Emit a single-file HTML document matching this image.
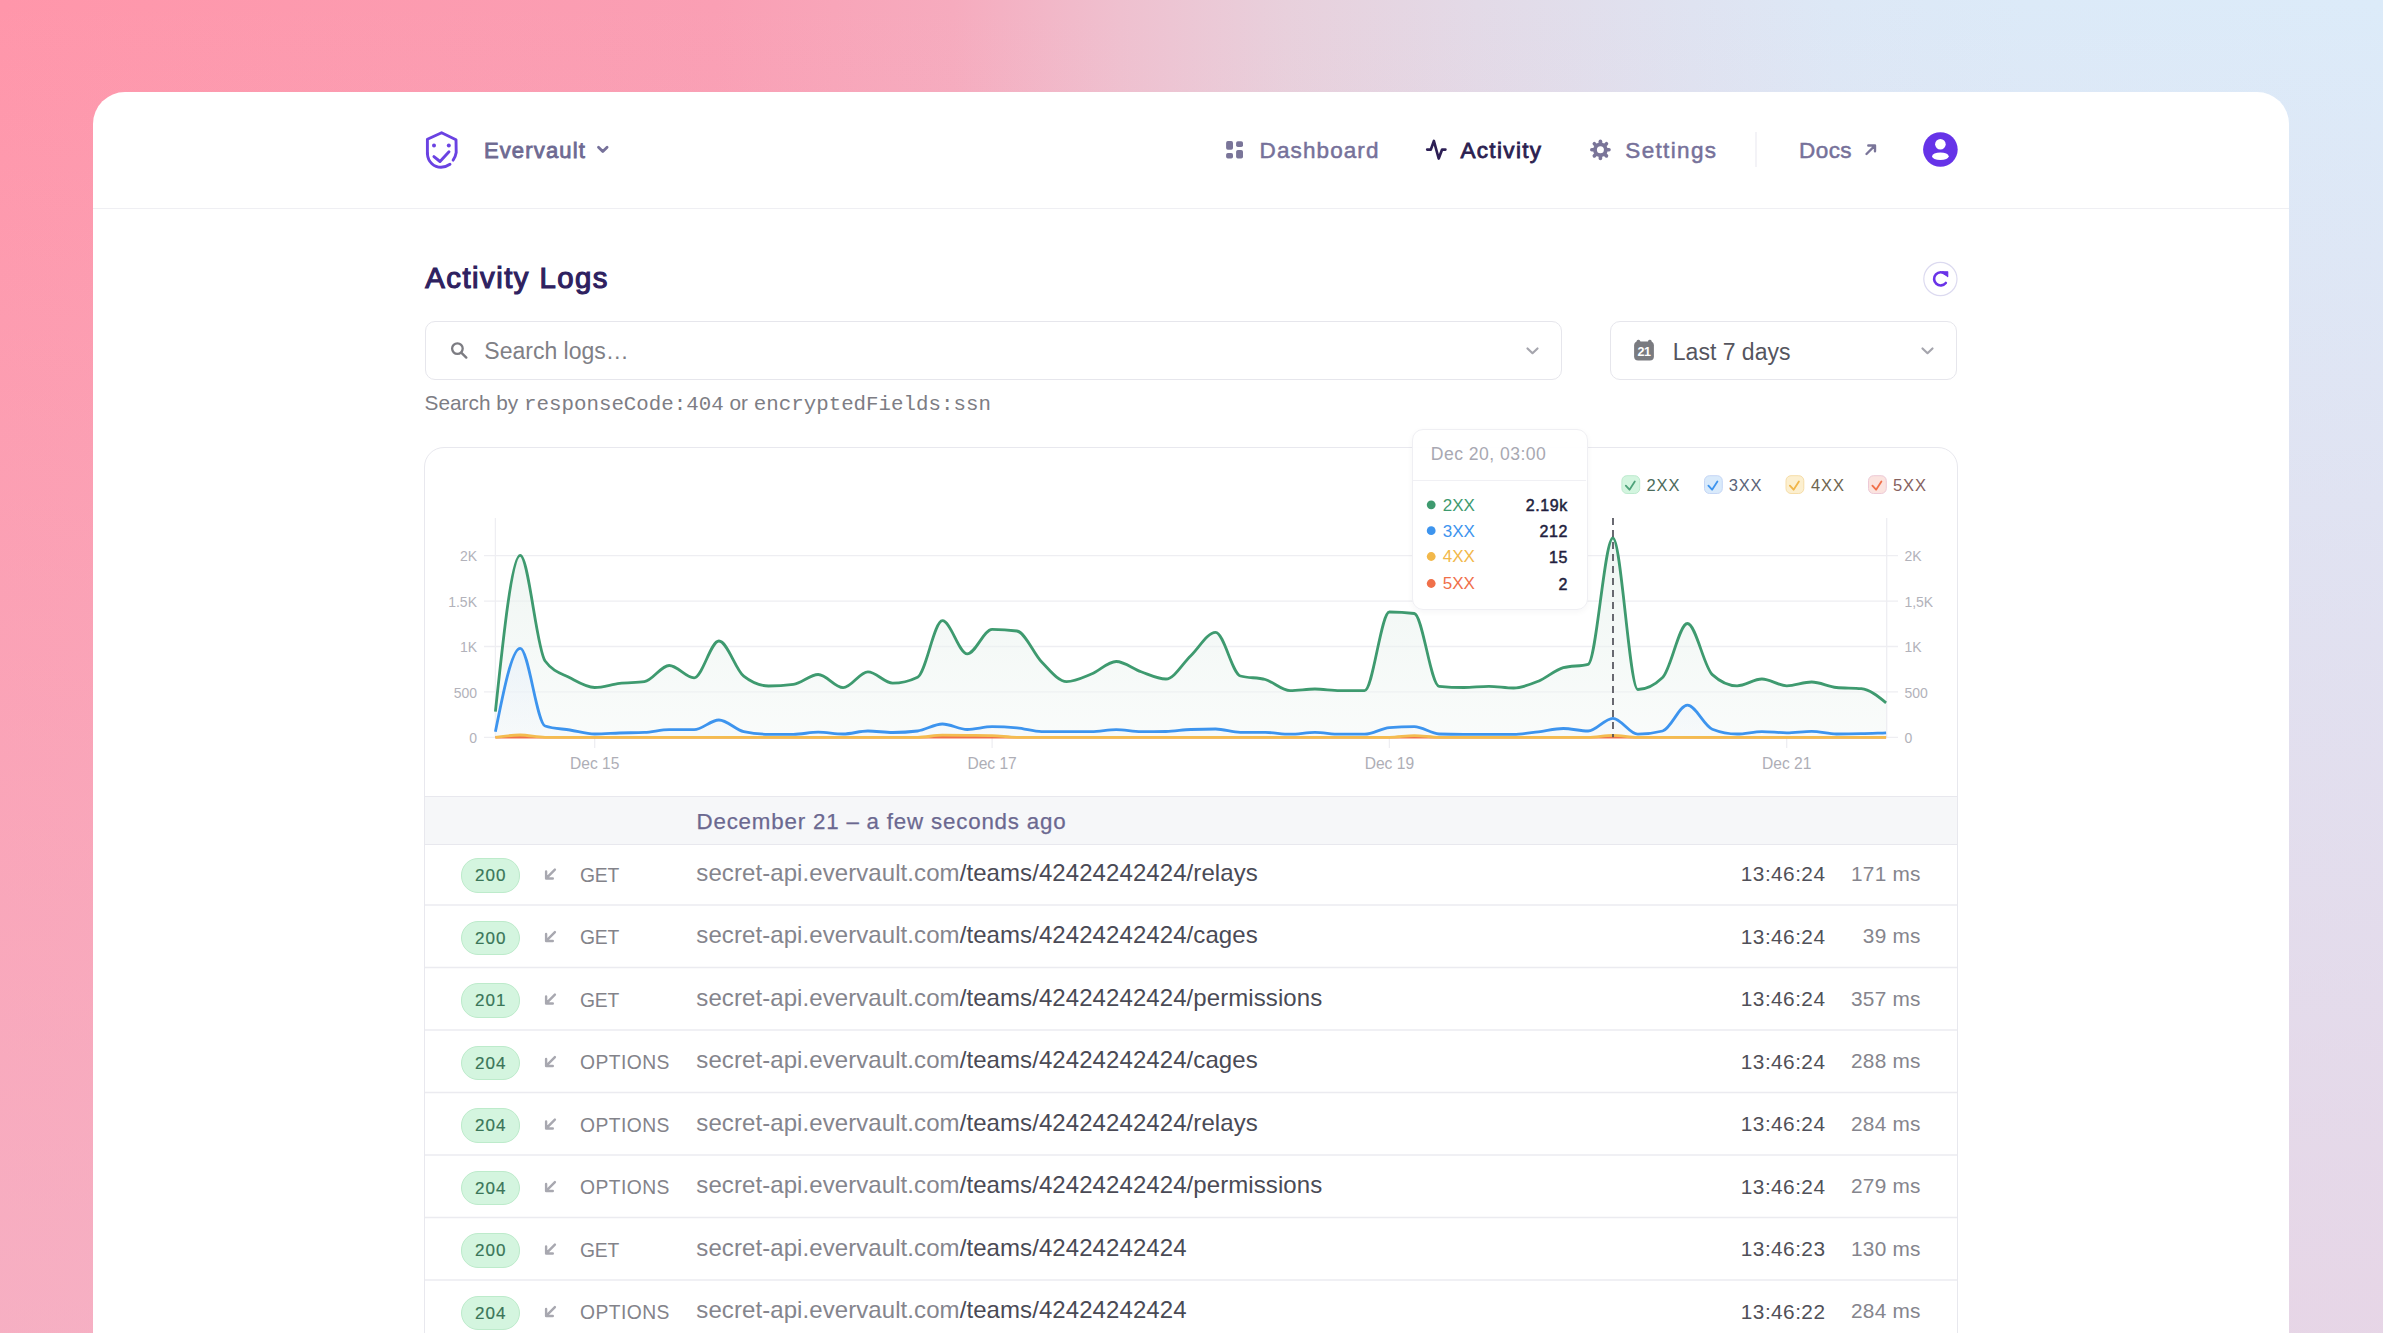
<!DOCTYPE html>
<html><head><meta charset='utf-8'>
<style>
html,body{margin:0;padding:0;}
body{width:2383px;height:1333px;overflow:hidden;position:relative;font-family:'Liberation Sans',sans-serif;
background:linear-gradient(180deg, rgba(239,196,215,0) 0%, rgba(239,196,215,0.55) 100%), linear-gradient(90deg,#FF96AA 0%,#FA9FB4 30%,#F6ABBE 40%,#EFC0CF 47%,#E8D0DC 54%,#E3DAE7 62%,#DFE3F1 71%,#DDE8F6 77%,#DCEAF8 85%,#DCEBF9 100%);}
.abs{position:absolute;}
.t{position:absolute;white-space:pre;line-height:1;}
#card{position:absolute;left:93px;top:92px;width:2196px;height:1300px;background:#fff;border-radius:32px;}
</style></head><body>
<div id='card'></div>
<div class='abs' style='left:93px;top:208px;width:2196px;height:1.3px;background:#EFEFF3'></div>
<div class='abs' style='left:424.6px;top:320.6px;width:1137.4px;height:59.9px;box-sizing:border-box;border:1.5px solid #E6E6EC;border-radius:10px;background:#fff'></div>
<div class='abs' style='left:1609.8px;top:320.6px;width:347.4px;height:59.9px;box-sizing:border-box;border:1.5px solid #E6E6EC;border-radius:10px;background:#fff'></div>
<div class='abs' style='left:424.2px;top:446.6px;width:1534px;height:950px;box-sizing:border-box;border:1.6px solid #E8E8EE;border-radius:20px;background:#fff'></div>
<svg class='abs' style='left:0;top:0' width='2383' height='1333' viewBox='0 0 2383 1333'>
<g fill='none' stroke='#6A42E2' stroke-width='2.9' stroke-linecap='round' stroke-linejoin='round'>
<path d='M427.4,154 L427.4,139.3 L441.6,132.7 L456,139.7 L456.2,152.6 Q455.5,157 453.1,160.2'/>
<path d='M427.4,153.5 C427.8,162.5 434.5,167.3 441,167.3 C444.5,167.3 447.5,166 450,164.3'/>
<path d='M433.9,156.6 L440,161.5 L449,151.7'/>
</g>
<circle cx='434' cy='145.4' r='2' fill='#6A42E2'/><circle cx='448.8' cy='145.4' r='2' fill='#6A42E2'/>
<path d='M598.5,147.3 L602.8,151.6 L607.1,147.3' fill='none' stroke='#76719A' stroke-width='2.8' stroke-linecap='round' stroke-linejoin='round'/>
<!-- dashboard icon -->
<g fill='#7A7599'>
<rect x='1226.1' y='141.1' width='6.9' height='8.7' rx='1.8'/>
<rect x='1236.1' y='141.2' width='6.9' height='5.8' rx='1.8'/>
<rect x='1226.1' y='153' width='6.9' height='5.5' rx='1.8'/>
<rect x='1236.1' y='150' width='6.9' height='8.5' rx='1.8'/>
</g>
<path d='M1427.2,149.6 L1430.8,149.6 L1433.9,141 L1438.7,158.5 L1442.1,149.6 L1445.4,149.6' fill='none' stroke='#2D1F55' stroke-width='2.7' stroke-linecap='round' stroke-linejoin='round'/>
<circle cx='1600.4' cy='149.8' r='7.3' fill='#7A7599'/><line x1='1605.90' y1='149.80' x2='1609.00' y2='149.80' stroke='#7A7599' stroke-width='3.6' stroke-linecap='round'/><line x1='1604.29' y1='153.69' x2='1606.48' y2='155.88' stroke='#7A7599' stroke-width='3.6' stroke-linecap='round'/><line x1='1600.40' y1='155.30' x2='1600.40' y2='158.40' stroke='#7A7599' stroke-width='3.6' stroke-linecap='round'/><line x1='1596.51' y1='153.69' x2='1594.32' y2='155.88' stroke='#7A7599' stroke-width='3.6' stroke-linecap='round'/><line x1='1594.90' y1='149.80' x2='1591.80' y2='149.80' stroke='#7A7599' stroke-width='3.6' stroke-linecap='round'/><line x1='1596.51' y1='145.91' x2='1594.32' y2='143.72' stroke='#7A7599' stroke-width='3.6' stroke-linecap='round'/><line x1='1600.40' y1='144.30' x2='1600.40' y2='141.20' stroke='#7A7599' stroke-width='3.6' stroke-linecap='round'/><line x1='1604.29' y1='145.91' x2='1606.48' y2='143.72' stroke='#7A7599' stroke-width='3.6' stroke-linecap='round'/><circle cx='1600.4' cy='149.8' r='3.5' fill='#fff'/>
<line x1='1756' y1='132' x2='1756' y2='167' stroke='#ECEBF2' stroke-width='1.2'/>
<path d='M1866.5,154 L1875,145.5 M1868.3,145.5 L1875,145.5 L1875,151.3' fill='none' stroke='#7A7599' stroke-width='2.4' stroke-linecap='round' stroke-linejoin='round'/>
<circle cx='1940.4' cy='149.5' r='17.3' fill='#6633E8'/>
<circle cx='1940.4' cy='144.3' r='5.3' fill='#fff'/>
<ellipse cx='1940.4' cy='156.2' rx='8.3' ry='3.8' fill='#fff'/>
<!-- refresh -->
<circle cx='1940.4' cy='279' r='16.6' fill='#fff' stroke='#DCDAF0' stroke-width='1.2'/>
<path d='M1945.4,274.2 A6.6,6.6 0 1,0 1945.8,283' fill='none' stroke='#6A33E8' stroke-width='2.6' stroke-linecap='round'/>
<path d='M1942.3,271.8 L1947.7,271.8 L1947.7,276.6 Z' fill='#6A33E8' stroke='#6A33E8' stroke-width='1.2' stroke-linejoin='round'/>
<!-- search icon -->
<circle cx='457.4' cy='348.6' r='5.3' fill='none' stroke='#7C7C82' stroke-width='2.3'/>
<path d='M461.5,352.8 L466.3,357.6' stroke='#7C7C82' stroke-width='2.4' stroke-linecap='round'/>
<path d='M1527.5,348.5 L1532.5,353.2 L1537.5,348.5' fill='none' stroke='#A5A5AD' stroke-width='2.2' stroke-linecap='round' stroke-linejoin='round'/>
<path d='M1922.5,348.5 L1927.5,353.2 L1932.5,348.5' fill='none' stroke='#A5A5AD' stroke-width='2.2' stroke-linecap='round' stroke-linejoin='round'/>
<!-- calendar -->
<rect x='1634.1' y='341.5' width='19.8' height='19' rx='4' fill='#7A7B80'/>
<rect x='1636.6' y='339.8' width='3.6' height='4' rx='1.5' fill='#7A7B80'/>
<rect x='1648' y='339.8' width='3.6' height='4' rx='1.5' fill='#7A7B80'/>
<text x='1644' y='356' font-family='Liberation Sans' font-weight='700' font-size='12.5' fill='#fff' text-anchor='middle' letter-spacing='-0.5'>21</text>
</svg>
<div class='t' style='left:483.9px;top:140.1px;font-size:22px;color:#6E6A92;font-weight:400;font-family:"Liberation Sans",sans-serif;letter-spacing:1.15px;-webkit-text-stroke:0.85px #6E6A92;'>Evervault</div>
<div class='t' style='left:1259.6px;top:139.7px;font-size:22.5px;color:#76719A;font-weight:400;font-family:"Liberation Sans",sans-serif;letter-spacing:1.1px;-webkit-text-stroke:0.5px #76719A;'>Dashboard</div>
<div class='t' style='left:1460.4px;top:139.9px;font-size:22.5px;color:#2B2150;font-weight:400;font-family:"Liberation Sans",sans-serif;letter-spacing:1.35px;-webkit-text-stroke:0.8px #2B2150;'>Activity</div>
<div class='t' style='left:1625.3px;top:139.7px;font-size:22.5px;color:#76719A;font-weight:400;font-family:"Liberation Sans",sans-serif;letter-spacing:1.35px;-webkit-text-stroke:0.5px #76719A;'>Settings</div>
<div class='t' style='left:1799.0px;top:139.7px;font-size:22.5px;color:#76719A;font-weight:400;font-family:"Liberation Sans",sans-serif;letter-spacing:0.45px;-webkit-text-stroke:0.5px #76719A;'>Docs</div>
<div class='t' style='left:425.3px;top:262.6px;font-size:29.3px;color:#2E2160;font-weight:400;font-family:"Liberation Sans",sans-serif;letter-spacing:1.48px;-webkit-text-stroke:1.15px #2E2160;'>Activity Logs</div>
<div class='t' style='left:484.3px;top:339.9px;font-size:23px;color:#808086;font-weight:400;font-family:"Liberation Sans",sans-serif;'>Search logs…</div>
<div class='t' style='left:424.6px;top:392.9px;font-size:20.8px;color:#7D7D84;font-weight:400;font-family:"Liberation Sans",sans-serif;'>Search by <span style="font-family:'Liberation Mono',monospace;font-size:20.8px">responseCode:404</span> or <span style="font-family:'Liberation Mono',monospace;font-size:20.8px">encryptedFields:ssn</span></div>
<div class='t' style='left:1672.8px;top:340.7px;font-size:23px;color:#55555E;font-weight:400;font-family:"Liberation Sans",sans-serif;'>Last 7 days</div>

<svg class='abs' style='left:0;top:0' width='2383' height='1333' viewBox='0 0 2383 1333'>
<defs>
<linearGradient id='gg' x1='0' y1='0' x2='0' y2='1'><stop offset='0' stop-color='#E4EFEA' stop-opacity='0.6'/><stop offset='1' stop-color='#F2F7F5' stop-opacity='0.45'/></linearGradient>
<linearGradient id='bg2' x1='0' y1='0' x2='0' y2='1'><stop offset='0' stop-color='#E3EEF9' stop-opacity='0.6'/><stop offset='1' stop-color='#F0F5FB' stop-opacity='0.3'/></linearGradient>
</defs>
<g stroke='#EEEEF2' stroke-width='1.3'>
<line x1='484' y1='555.7' x2='1898' y2='555.7'/>
<line x1='484' y1='601.1' x2='1898' y2='601.1'/>
<line x1='484' y1='646.5' x2='1898' y2='646.5'/>
<line x1='484' y1='691.9' x2='1898' y2='691.9'/>
<line x1='484' y1='737.3' x2='1898' y2='737.3'/>
<line x1='495.4' y1='518' x2='495.4' y2='737.3'/><line x1='1886.7' y1='518' x2='1886.7' y2='737.3'/>
<line x1='594.7' y1='737.3' x2='594.7' y2='748'/>
<line x1='992.1' y1='737.3' x2='992.1' y2='748'/>
<line x1='1389.4' y1='737.3' x2='1389.4' y2='748'/>
<line x1='1786.7' y1='737.3' x2='1786.7' y2='748'/>
</g>
<path d='M495.4,711.6C503.7,633.5 512.0,555.4 520.2,555.4C528.5,555.4 536.8,649.8 545.1,661.0C553.3,672.2 561.6,673.4 569.9,677.8C578.2,682.2 586.5,687.5 594.7,687.5C603.0,687.5 611.3,684.4 619.6,683.4C627.8,682.4 636.1,682.8 644.4,681.7C652.7,680.6 661.0,665.5 669.2,665.5C677.5,665.5 685.8,677.8 694.1,677.8C702.3,677.8 710.6,641.0 718.9,641.0C727.2,641.0 735.5,669.7 743.7,676.2C752.0,682.7 760.3,686.0 768.6,686.0C776.9,686.0 785.1,685.4 793.4,684.3C801.7,683.2 810.0,674.5 818.2,674.5C826.5,674.5 834.8,687.6 843.1,687.6C851.4,687.6 859.6,671.8 867.9,671.8C876.2,671.8 884.5,683.2 892.7,683.2C901.0,683.2 909.3,681.2 917.6,677.2C925.9,673.2 934.1,620.7 942.4,620.7C950.7,620.7 959.0,653.9 967.2,653.9C975.5,653.9 983.8,629.4 992.1,629.4C1000.4,629.4 1008.6,629.9 1016.9,631.0C1025.2,632.1 1033.5,653.6 1041.7,662.0C1050.0,670.4 1058.3,681.6 1066.6,681.6C1074.9,681.6 1083.1,677.4 1091.4,674.0C1099.7,670.6 1108.0,661.5 1116.2,661.5C1124.5,661.5 1132.8,668.9 1141.1,671.8C1149.4,674.7 1157.6,679.0 1165.9,679.0C1174.2,679.0 1182.5,663.5 1190.8,655.7C1199.0,647.9 1207.3,632.4 1215.6,632.4C1223.9,632.4 1232.1,673.7 1240.4,676.0C1248.7,678.3 1257.0,677.2 1265.3,679.5C1273.5,681.8 1281.8,690.6 1290.1,690.6C1298.4,690.6 1306.6,689.0 1314.9,689.0C1323.2,689.0 1331.5,690.6 1339.8,690.6C1348.0,690.6 1356.3,690.6 1364.6,690.6C1372.9,690.6 1381.1,612.0 1389.4,612.0C1397.7,612.0 1406.0,612.5 1414.3,613.5C1422.5,614.5 1430.8,685.5 1439.1,686.3C1447.4,687.1 1455.6,687.5 1463.9,687.5C1472.2,687.5 1480.5,686.3 1488.8,686.3C1497.0,686.3 1505.3,688.0 1513.6,688.0C1521.9,688.0 1530.1,684.6 1538.4,681.2C1546.7,677.8 1555.0,670.0 1563.3,667.7C1571.5,665.4 1579.8,666.6 1588.1,664.3C1596.4,662.0 1604.6,538.0 1612.9,538.0C1621.2,538.0 1629.5,689.5 1637.8,689.5C1646.0,689.5 1654.3,685.5 1662.6,677.5C1670.9,669.5 1679.2,623.5 1687.4,623.5C1695.7,623.5 1704.0,667.1 1712.3,674.6C1720.5,682.1 1728.8,685.8 1737.1,685.8C1745.4,685.8 1753.7,679.0 1761.9,679.0C1770.2,679.0 1778.5,685.8 1786.8,685.8C1795.0,685.8 1803.3,682.0 1811.6,682.0C1819.9,682.0 1828.2,686.7 1836.4,687.5C1844.7,688.3 1853.0,687.9 1861.3,688.7C1869.5,689.5 1877.8,696.1 1886.1,702.8 L1886.1,737.3 L495.4,737.3 Z' fill='url(#gg)'/>
<path d='M495.4,731.8C503.7,690.0 512.0,648.3 520.2,648.3C528.5,648.3 536.8,723.3 545.1,726.0C553.3,728.7 561.6,728.7 569.9,730.0C578.2,731.3 586.5,734.0 594.7,734.0C603.0,734.0 611.3,733.3 619.6,733.0C627.8,732.7 636.1,732.8 644.4,732.4C652.7,732.0 661.0,729.7 669.2,729.7C677.5,729.7 685.8,729.7 694.1,729.7C702.3,729.7 710.6,720.0 718.9,720.0C727.2,720.0 735.5,729.8 743.7,731.6C752.0,733.4 760.3,734.3 768.6,734.3C776.9,734.3 785.1,734.3 793.4,734.3C801.7,734.3 810.0,732.2 818.2,732.2C826.5,732.2 834.8,734.0 843.1,734.0C851.4,734.0 859.6,731.0 867.9,731.0C876.2,731.0 884.5,732.5 892.7,732.5C901.0,732.5 909.3,732.0 917.6,731.0C925.9,730.0 934.1,724.0 942.4,724.0C950.7,724.0 959.0,729.5 967.2,729.5C975.5,729.5 983.8,726.7 992.1,726.7C1000.4,726.7 1008.6,727.1 1016.9,727.8C1025.2,728.5 1033.5,731.6 1041.7,731.6C1050.0,731.6 1058.3,731.6 1066.6,731.6C1074.9,731.6 1083.1,731.6 1091.4,731.6C1099.7,731.6 1108.0,729.7 1116.2,729.7C1124.5,729.7 1132.8,731.6 1141.1,731.6C1149.4,731.6 1157.6,731.6 1165.9,731.5C1174.2,731.4 1182.5,729.8 1190.8,729.5C1199.0,729.2 1207.3,729.0 1215.6,729.0C1223.9,729.0 1232.1,732.4 1240.4,732.4C1248.7,732.4 1257.0,732.4 1265.3,732.4C1273.5,732.4 1281.8,734.2 1290.1,734.2C1298.4,734.2 1306.6,732.4 1314.9,732.4C1323.2,732.4 1331.5,734.2 1339.8,734.2C1348.0,734.2 1356.3,734.2 1364.6,734.2C1372.9,734.2 1381.1,728.4 1389.4,727.7C1397.7,727.0 1406.0,726.7 1414.3,726.7C1422.5,726.7 1430.8,733.7 1439.1,734.0C1447.4,734.3 1455.6,734.4 1463.9,734.4C1472.2,734.4 1480.5,734.4 1488.8,734.4C1497.0,734.4 1505.3,734.4 1513.6,734.4C1521.9,734.4 1530.1,732.8 1538.4,731.8C1546.7,730.8 1555.0,728.5 1563.3,728.5C1571.5,728.5 1579.8,731.0 1588.1,731.0C1596.4,731.0 1604.6,718.3 1612.9,718.3C1621.2,718.3 1629.5,734.2 1637.8,734.2C1646.0,734.2 1654.3,733.1 1662.6,731.0C1670.9,728.9 1679.2,705.2 1687.4,705.2C1695.7,705.2 1704.0,726.0 1712.3,729.2C1720.5,732.4 1728.8,734.0 1737.1,734.0C1745.4,734.0 1753.7,731.6 1761.9,731.6C1770.2,731.6 1778.5,732.8 1786.8,732.8C1795.0,732.8 1803.3,731.4 1811.6,731.4C1819.9,731.4 1828.2,734.0 1836.4,734.0C1844.7,734.0 1853.0,733.9 1861.3,733.7C1869.5,733.5 1877.8,733.1 1886.1,732.8 L1886.1,737.3 L495.4,737.3 Z' fill='url(#bg2)'/>
<path d='M495.4,711.6C503.7,633.5 512.0,555.4 520.2,555.4C528.5,555.4 536.8,649.8 545.1,661.0C553.3,672.2 561.6,673.4 569.9,677.8C578.2,682.2 586.5,687.5 594.7,687.5C603.0,687.5 611.3,684.4 619.6,683.4C627.8,682.4 636.1,682.8 644.4,681.7C652.7,680.6 661.0,665.5 669.2,665.5C677.5,665.5 685.8,677.8 694.1,677.8C702.3,677.8 710.6,641.0 718.9,641.0C727.2,641.0 735.5,669.7 743.7,676.2C752.0,682.7 760.3,686.0 768.6,686.0C776.9,686.0 785.1,685.4 793.4,684.3C801.7,683.2 810.0,674.5 818.2,674.5C826.5,674.5 834.8,687.6 843.1,687.6C851.4,687.6 859.6,671.8 867.9,671.8C876.2,671.8 884.5,683.2 892.7,683.2C901.0,683.2 909.3,681.2 917.6,677.2C925.9,673.2 934.1,620.7 942.4,620.7C950.7,620.7 959.0,653.9 967.2,653.9C975.5,653.9 983.8,629.4 992.1,629.4C1000.4,629.4 1008.6,629.9 1016.9,631.0C1025.2,632.1 1033.5,653.6 1041.7,662.0C1050.0,670.4 1058.3,681.6 1066.6,681.6C1074.9,681.6 1083.1,677.4 1091.4,674.0C1099.7,670.6 1108.0,661.5 1116.2,661.5C1124.5,661.5 1132.8,668.9 1141.1,671.8C1149.4,674.7 1157.6,679.0 1165.9,679.0C1174.2,679.0 1182.5,663.5 1190.8,655.7C1199.0,647.9 1207.3,632.4 1215.6,632.4C1223.9,632.4 1232.1,673.7 1240.4,676.0C1248.7,678.3 1257.0,677.2 1265.3,679.5C1273.5,681.8 1281.8,690.6 1290.1,690.6C1298.4,690.6 1306.6,689.0 1314.9,689.0C1323.2,689.0 1331.5,690.6 1339.8,690.6C1348.0,690.6 1356.3,690.6 1364.6,690.6C1372.9,690.6 1381.1,612.0 1389.4,612.0C1397.7,612.0 1406.0,612.5 1414.3,613.5C1422.5,614.5 1430.8,685.5 1439.1,686.3C1447.4,687.1 1455.6,687.5 1463.9,687.5C1472.2,687.5 1480.5,686.3 1488.8,686.3C1497.0,686.3 1505.3,688.0 1513.6,688.0C1521.9,688.0 1530.1,684.6 1538.4,681.2C1546.7,677.8 1555.0,670.0 1563.3,667.7C1571.5,665.4 1579.8,666.6 1588.1,664.3C1596.4,662.0 1604.6,538.0 1612.9,538.0C1621.2,538.0 1629.5,689.5 1637.8,689.5C1646.0,689.5 1654.3,685.5 1662.6,677.5C1670.9,669.5 1679.2,623.5 1687.4,623.5C1695.7,623.5 1704.0,667.1 1712.3,674.6C1720.5,682.1 1728.8,685.8 1737.1,685.8C1745.4,685.8 1753.7,679.0 1761.9,679.0C1770.2,679.0 1778.5,685.8 1786.8,685.8C1795.0,685.8 1803.3,682.0 1811.6,682.0C1819.9,682.0 1828.2,686.7 1836.4,687.5C1844.7,688.3 1853.0,687.9 1861.3,688.7C1869.5,689.5 1877.8,696.1 1886.1,702.8' fill='none' stroke='#3E9A6F' stroke-width='2.8' stroke-linejoin='round'/>
<path d='M495.4,731.8C503.7,690.0 512.0,648.3 520.2,648.3C528.5,648.3 536.8,723.3 545.1,726.0C553.3,728.7 561.6,728.7 569.9,730.0C578.2,731.3 586.5,734.0 594.7,734.0C603.0,734.0 611.3,733.3 619.6,733.0C627.8,732.7 636.1,732.8 644.4,732.4C652.7,732.0 661.0,729.7 669.2,729.7C677.5,729.7 685.8,729.7 694.1,729.7C702.3,729.7 710.6,720.0 718.9,720.0C727.2,720.0 735.5,729.8 743.7,731.6C752.0,733.4 760.3,734.3 768.6,734.3C776.9,734.3 785.1,734.3 793.4,734.3C801.7,734.3 810.0,732.2 818.2,732.2C826.5,732.2 834.8,734.0 843.1,734.0C851.4,734.0 859.6,731.0 867.9,731.0C876.2,731.0 884.5,732.5 892.7,732.5C901.0,732.5 909.3,732.0 917.6,731.0C925.9,730.0 934.1,724.0 942.4,724.0C950.7,724.0 959.0,729.5 967.2,729.5C975.5,729.5 983.8,726.7 992.1,726.7C1000.4,726.7 1008.6,727.1 1016.9,727.8C1025.2,728.5 1033.5,731.6 1041.7,731.6C1050.0,731.6 1058.3,731.6 1066.6,731.6C1074.9,731.6 1083.1,731.6 1091.4,731.6C1099.7,731.6 1108.0,729.7 1116.2,729.7C1124.5,729.7 1132.8,731.6 1141.1,731.6C1149.4,731.6 1157.6,731.6 1165.9,731.5C1174.2,731.4 1182.5,729.8 1190.8,729.5C1199.0,729.2 1207.3,729.0 1215.6,729.0C1223.9,729.0 1232.1,732.4 1240.4,732.4C1248.7,732.4 1257.0,732.4 1265.3,732.4C1273.5,732.4 1281.8,734.2 1290.1,734.2C1298.4,734.2 1306.6,732.4 1314.9,732.4C1323.2,732.4 1331.5,734.2 1339.8,734.2C1348.0,734.2 1356.3,734.2 1364.6,734.2C1372.9,734.2 1381.1,728.4 1389.4,727.7C1397.7,727.0 1406.0,726.7 1414.3,726.7C1422.5,726.7 1430.8,733.7 1439.1,734.0C1447.4,734.3 1455.6,734.4 1463.9,734.4C1472.2,734.4 1480.5,734.4 1488.8,734.4C1497.0,734.4 1505.3,734.4 1513.6,734.4C1521.9,734.4 1530.1,732.8 1538.4,731.8C1546.7,730.8 1555.0,728.5 1563.3,728.5C1571.5,728.5 1579.8,731.0 1588.1,731.0C1596.4,731.0 1604.6,718.3 1612.9,718.3C1621.2,718.3 1629.5,734.2 1637.8,734.2C1646.0,734.2 1654.3,733.1 1662.6,731.0C1670.9,728.9 1679.2,705.2 1687.4,705.2C1695.7,705.2 1704.0,726.0 1712.3,729.2C1720.5,732.4 1728.8,734.0 1737.1,734.0C1745.4,734.0 1753.7,731.6 1761.9,731.6C1770.2,731.6 1778.5,732.8 1786.8,732.8C1795.0,732.8 1803.3,731.4 1811.6,731.4C1819.9,731.4 1828.2,734.0 1836.4,734.0C1844.7,734.0 1853.0,733.9 1861.3,733.7C1869.5,733.5 1877.8,733.1 1886.1,732.8' fill='none' stroke='#3D94EE' stroke-width='2.8' stroke-linejoin='round'/>
<path d='M495.4,737.3C503.7,737.3 512.0,737.3 520.2,737.3C528.5,737.3 536.8,737.3 545.1,737.3C553.3,737.3 561.6,737.3 569.9,737.3C578.2,737.3 586.5,737.3 594.7,737.3C603.0,737.3 611.3,737.3 619.6,737.3C627.8,737.3 636.1,737.3 644.4,737.3C652.7,737.3 661.0,737.3 669.2,737.3C677.5,737.3 685.8,737.3 694.1,737.3C702.3,737.3 710.6,737.3 718.9,737.3C727.2,737.3 735.5,737.3 743.7,737.3C752.0,737.3 760.3,737.3 768.6,737.3C776.9,737.3 785.1,737.3 793.4,737.3C801.7,737.3 810.0,737.3 818.2,737.3C826.5,737.3 834.8,737.3 843.1,737.3C851.4,737.3 859.6,737.3 867.9,737.3C876.2,737.3 884.5,737.3 892.7,737.3C901.0,737.3 909.3,737.3 917.6,737.3C925.9,737.3 934.1,737.3 942.4,737.3C950.7,737.3 959.0,737.3 967.2,737.3C975.5,737.3 983.8,737.3 992.1,737.3C1000.4,737.3 1008.6,737.3 1016.9,737.3C1025.2,737.3 1033.5,737.3 1041.7,737.3C1050.0,737.3 1058.3,737.3 1066.6,737.3C1074.9,737.3 1083.1,737.3 1091.4,737.3C1099.7,737.3 1108.0,737.3 1116.2,737.3C1124.5,737.3 1132.8,737.3 1141.1,737.3C1149.4,737.3 1157.6,737.3 1165.9,737.3C1174.2,737.3 1182.5,737.3 1190.8,737.3C1199.0,737.3 1207.3,737.3 1215.6,737.3C1223.9,737.3 1232.1,737.3 1240.4,737.3C1248.7,737.3 1257.0,737.3 1265.3,737.3C1273.5,737.3 1281.8,737.3 1290.1,737.3C1298.4,737.3 1306.6,737.3 1314.9,737.3C1323.2,737.3 1331.5,737.3 1339.8,737.3C1348.0,737.3 1356.3,737.3 1364.6,737.3C1372.9,737.3 1381.1,737.3 1389.4,737.3C1397.7,737.3 1406.0,737.3 1414.3,737.3C1422.5,737.3 1430.8,737.3 1439.1,737.3C1447.4,737.3 1455.6,737.3 1463.9,737.3C1472.2,737.3 1480.5,737.3 1488.8,737.3C1497.0,737.3 1505.3,737.3 1513.6,737.3C1521.9,737.3 1530.1,737.3 1538.4,737.3C1546.7,737.3 1555.0,737.3 1563.3,737.3C1571.5,737.3 1579.8,737.3 1588.1,737.3C1596.4,737.3 1604.6,737.3 1612.9,737.3C1621.2,737.3 1629.5,737.3 1637.8,737.3C1646.0,737.3 1654.3,737.3 1662.6,737.3C1670.9,737.3 1679.2,737.3 1687.4,737.3C1695.7,737.3 1704.0,737.3 1712.3,737.3C1720.5,737.3 1728.8,737.3 1737.1,737.3C1745.4,737.3 1753.7,737.3 1761.9,737.3C1770.2,737.3 1778.5,737.3 1786.8,737.3C1795.0,737.3 1803.3,737.3 1811.6,737.3C1819.9,737.3 1828.2,737.3 1836.4,737.3C1844.7,737.3 1853.0,737.3 1861.3,737.3C1869.5,737.3 1877.8,737.3 1886.1,737.3' fill='none' stroke='#F0704A' stroke-width='2.4'/>
<path d='M495.4,737.3C503.7,736.1 512.0,735.0 520.2,735.0C528.5,735.0 536.8,737.3 545.1,737.3C553.3,737.3 561.6,737.3 569.9,737.3C578.2,737.3 586.5,737.3 594.7,737.3C603.0,737.3 611.3,737.3 619.6,737.3C627.8,737.3 636.1,737.3 644.4,737.3C652.7,737.3 661.0,737.3 669.2,737.3C677.5,737.3 685.8,737.3 694.1,737.3C702.3,737.3 710.6,737.3 718.9,737.3C727.2,737.3 735.5,737.3 743.7,737.3C752.0,737.3 760.3,737.3 768.6,737.3C776.9,737.3 785.1,737.3 793.4,737.3C801.7,737.3 810.0,737.3 818.2,737.3C826.5,737.3 834.8,737.3 843.1,737.3C851.4,737.3 859.6,737.3 867.9,737.3C876.2,737.3 884.5,737.3 892.7,737.3C901.0,737.3 909.3,737.3 917.6,737.3C925.9,737.3 934.1,735.2 942.4,735.2C950.7,735.2 959.0,735.2 967.2,735.3C975.5,735.4 983.8,735.4 992.1,735.6C1000.4,735.8 1008.6,737.3 1016.9,737.3C1025.2,737.3 1033.5,737.3 1041.7,737.3C1050.0,737.3 1058.3,737.3 1066.6,737.3C1074.9,737.3 1083.1,737.3 1091.4,737.3C1099.7,737.3 1108.0,737.3 1116.2,737.3C1124.5,737.3 1132.8,737.3 1141.1,737.3C1149.4,737.3 1157.6,737.3 1165.9,737.3C1174.2,737.3 1182.5,737.3 1190.8,737.3C1199.0,737.3 1207.3,737.3 1215.6,737.3C1223.9,737.3 1232.1,737.3 1240.4,737.3C1248.7,737.3 1257.0,737.3 1265.3,737.3C1273.5,737.3 1281.8,737.3 1290.1,737.3C1298.4,737.3 1306.6,737.3 1314.9,737.3C1323.2,737.3 1331.5,737.3 1339.8,737.3C1348.0,737.3 1356.3,737.3 1364.6,737.3C1372.9,737.3 1381.1,737.3 1389.4,737.3C1397.7,737.3 1406.0,735.6 1414.3,735.6C1422.5,735.6 1430.8,737.3 1439.1,737.3C1447.4,737.3 1455.6,737.3 1463.9,737.3C1472.2,737.3 1480.5,737.3 1488.8,737.3C1497.0,737.3 1505.3,737.3 1513.6,737.3C1521.9,737.3 1530.1,737.3 1538.4,737.3C1546.7,737.3 1555.0,737.3 1563.3,737.3C1571.5,737.3 1579.8,737.3 1588.1,737.3C1596.4,737.3 1604.6,735.4 1612.9,735.4C1621.2,735.4 1629.5,737.3 1637.8,737.3C1646.0,737.3 1654.3,737.3 1662.6,737.3C1670.9,737.3 1679.2,737.3 1687.4,737.3C1695.7,737.3 1704.0,737.3 1712.3,737.3C1720.5,737.3 1728.8,737.3 1737.1,737.3C1745.4,737.3 1753.7,737.3 1761.9,737.3C1770.2,737.3 1778.5,737.3 1786.8,737.3C1795.0,737.3 1803.3,737.3 1811.6,737.3C1819.9,737.3 1828.2,737.3 1836.4,737.3C1844.7,737.3 1853.0,737.3 1861.3,737.3C1869.5,737.3 1877.8,737.3 1886.1,737.3' fill='none' stroke='#F4BC4F' stroke-width='2.8'/>
<line x1='1613' y1='518' x2='1613' y2='737.3' stroke='#45454F' stroke-width='1.6' stroke-dasharray='7,5'/>
</svg>
<div class='abs' style='left:447px;top:500px;width:40px;height:260px;overflow:hidden'><div class='abs' style='left:-447px;top:-500px;width:2383px;height:1333px'><div class='t' style='right:1906.0px;top:549.3px;font-size:14px;color:#B2B2BA;font-weight:400;font-family:"Liberation Sans",sans-serif;'>2K</div>
<div class='t' style='right:1906.0px;top:594.7px;font-size:14px;color:#B2B2BA;font-weight:400;font-family:"Liberation Sans",sans-serif;'>1.5K</div>
<div class='t' style='right:1906.0px;top:640.1px;font-size:14px;color:#B2B2BA;font-weight:400;font-family:"Liberation Sans",sans-serif;'>1K</div>
<div class='t' style='right:1906.0px;top:685.5px;font-size:14px;color:#B2B2BA;font-weight:400;font-family:"Liberation Sans",sans-serif;'>500</div>
<div class='t' style='right:1906.0px;top:730.9px;font-size:14px;color:#B2B2BA;font-weight:400;font-family:"Liberation Sans",sans-serif;'>0</div>
</div></div><div class='abs' style='left:1900px;top:500px;width:33px;height:260px;overflow:hidden'><div class='abs' style='left:-1900px;top:-500px;width:2383px;height:1333px'><div class='t' style='left:1904.4px;top:549.3px;font-size:14px;color:#B2B2BA;font-weight:400;font-family:"Liberation Sans",sans-serif;'>2K</div>
<div class='t' style='left:1904.4px;top:594.7px;font-size:14px;color:#B2B2BA;font-weight:400;font-family:"Liberation Sans",sans-serif;'>1,5K</div>
<div class='t' style='left:1904.4px;top:640.1px;font-size:14px;color:#B2B2BA;font-weight:400;font-family:"Liberation Sans",sans-serif;'>1K</div>
<div class='t' style='left:1904.4px;top:685.5px;font-size:14px;color:#B2B2BA;font-weight:400;font-family:"Liberation Sans",sans-serif;'>500</div>
<div class='t' style='left:1904.4px;top:730.9px;font-size:14px;color:#B2B2BA;font-weight:400;font-family:"Liberation Sans",sans-serif;'>0</div>
</div></div><div class='t' style='left:594.7px;transform:translateX(-50%);top:756.0px;font-size:15.6px;color:#AEAEB6;font-weight:400;font-family:"Liberation Sans",sans-serif;'>Dec 15</div>
<div class='t' style='left:992.1px;transform:translateX(-50%);top:756.0px;font-size:15.6px;color:#AEAEB6;font-weight:400;font-family:"Liberation Sans",sans-serif;'>Dec 17</div>
<div class='t' style='left:1389.4px;transform:translateX(-50%);top:756.0px;font-size:15.6px;color:#AEAEB6;font-weight:400;font-family:"Liberation Sans",sans-serif;'>Dec 19</div>
<div class='t' style='left:1786.7px;transform:translateX(-50%);top:756.0px;font-size:15.6px;color:#AEAEB6;font-weight:400;font-family:"Liberation Sans",sans-serif;'>Dec 21</div>
<svg class='abs' style='left:0;top:0' width='2383' height='1333' viewBox='0 0 2383 1333'><rect x='1621.9' y='475.7' width='17.8' height='17.8' rx='5' fill='#D3F5DF' stroke='#BDEACE' stroke-width='1'/><path d='M1625.8000000000002,485.6 L1629.5,489.7 L1634.8000000000002,481.4' fill='none' stroke='#4FA37A' stroke-width='1.8' stroke-linecap='round' stroke-linejoin='round'/><rect x='1704.5' y='475.7' width='17.8' height='17.8' rx='5' fill='#D9EAFB' stroke='#C5D6F5' stroke-width='1'/><path d='M1708.4,485.6 L1712.1,489.7 L1717.4,481.4' fill='none' stroke='#3D94EE' stroke-width='1.8' stroke-linecap='round' stroke-linejoin='round'/><rect x='1786.0' y='475.7' width='17.8' height='17.8' rx='5' fill='#FCEFCF' stroke='#F6DDA8' stroke-width='1'/><path d='M1789.9,485.6 L1793.6,489.7 L1798.9,481.4' fill='none' stroke='#F0B548' stroke-width='1.8' stroke-linecap='round' stroke-linejoin='round'/><rect x='1868.5' y='475.7' width='17.8' height='17.8' rx='5' fill='#FBE3DF' stroke='#EDC9D6' stroke-width='1'/><path d='M1872.4,485.6 L1876.1,489.7 L1881.4,481.4' fill='none' stroke='#F0704A' stroke-width='1.8' stroke-linecap='round' stroke-linejoin='round'/></svg>
<div class='t' style='left:1646.5px;top:476.5px;font-size:16.5px;color:#4C6B5C;font-weight:400;font-family:"Liberation Sans",sans-serif;letter-spacing:0.85px;'>2XX</div>
<div class='t' style='left:1728.7px;top:476.5px;font-size:16.5px;color:#5A6479;font-weight:400;font-family:"Liberation Sans",sans-serif;letter-spacing:0.85px;'>3XX</div>
<div class='t' style='left:1811.0px;top:476.5px;font-size:16.5px;color:#6E6550;font-weight:400;font-family:"Liberation Sans",sans-serif;letter-spacing:0.85px;'>4XX</div>
<div class='t' style='left:1893.0px;top:476.5px;font-size:16.5px;color:#86625F;font-weight:400;font-family:"Liberation Sans",sans-serif;letter-spacing:0.85px;'>5XX</div>
<div class='abs' style='left:1412px;top:429px;width:174px;height:179px;border:1.3px solid #EFEFF3;border-radius:11px;background:rgba(255,255,255,0.96);box-shadow:0 2px 6px rgba(30,30,60,0.04)'></div>
<div class='abs' style='left:1413px;top:480px;width:173px;height:1.3px;background:#F0F0F4'></div>
<div class='t' style='left:1430.8px;top:445.7px;font-size:17.6px;color:#A8A8B2;font-weight:400;font-family:"Liberation Sans",sans-serif;letter-spacing:0.45px;'>Dec 20, 03:00</div>
<svg class='abs' style='left:0;top:0' width='2383' height='1333' viewBox='0 0 2383 1333'><circle cx='1431.2' cy='504.8' r='4.4' fill='#3E9A6F'/><circle cx='1431.2' cy='530.7' r='4.4' fill='#3D94EE'/><circle cx='1431.2' cy='556.5' r='4.4' fill='#F2B84A'/><circle cx='1431.2' cy='583.5' r='4.4' fill='#F0704A'/></svg>
<div class='t' style='left:1442.8px;top:496.7px;font-size:17px;color:#3E9A6F;font-weight:400;font-family:"Liberation Sans",sans-serif;'>2XX</div>
<div class='t' style='right:815.1px;top:498.1px;font-size:16px;color:#231F40;font-weight:400;font-family:"Liberation Sans",sans-serif;-webkit-text-stroke:0.5px #231F40;letter-spacing:0.6px;'>2.19k</div>
<div class='t' style='left:1442.8px;top:522.6px;font-size:17px;color:#3D94EE;font-weight:400;font-family:"Liberation Sans",sans-serif;'>3XX</div>
<div class='t' style='right:815.1px;top:524.0px;font-size:16px;color:#231F40;font-weight:400;font-family:"Liberation Sans",sans-serif;-webkit-text-stroke:0.5px #231F40;letter-spacing:0.6px;'>212</div>
<div class='t' style='left:1442.8px;top:548.4px;font-size:17px;color:#F2B84A;font-weight:400;font-family:"Liberation Sans",sans-serif;'>4XX</div>
<div class='t' style='right:815.1px;top:549.8px;font-size:16px;color:#231F40;font-weight:400;font-family:"Liberation Sans",sans-serif;-webkit-text-stroke:0.5px #231F40;letter-spacing:0.6px;'>15</div>
<div class='t' style='left:1442.8px;top:575.4px;font-size:17px;color:#F0704A;font-weight:400;font-family:"Liberation Sans",sans-serif;'>5XX</div>
<div class='t' style='right:815.1px;top:576.8px;font-size:16px;color:#231F40;font-weight:400;font-family:"Liberation Sans",sans-serif;-webkit-text-stroke:0.5px #231F40;letter-spacing:0.6px;'>2</div>

<div class='abs' style='left:425px;top:796px;width:1532px;height:47px;background:#F6F7F9;border-top:1.3px solid #E8E8EE;border-bottom:1.3px solid #E8E8EE'></div>
<div class='t' style='left:696.5px;top:810.5px;font-size:22.3px;color:#6B6890;font-weight:400;font-family:"Liberation Sans",sans-serif;letter-spacing:0.82px;-webkit-text-stroke:0.25px #6B6890;'>December 21 – a few seconds ago</div>
<svg class='abs' style='left:0;top:0' width='2383' height='1333' viewBox='0 0 2383 1333'><line x1='425' y1='905.0' x2='1957' y2='905.0' stroke='#EBEBF0' stroke-width='1.3'/><path d='M554.9,869.6 L546.4,878.2 M546.1,871.4 L546.1,878.5 L552.8,878.5' fill='none' stroke='#A8A8B0' stroke-width='2.4' stroke-linecap='round' stroke-linejoin='round'/><line x1='425' y1='967.5' x2='1957' y2='967.5' stroke='#EBEBF0' stroke-width='1.3'/><path d='M554.9,932.1 L546.4,940.7 M546.1,933.9 L546.1,941.0 L552.8,941.0' fill='none' stroke='#A8A8B0' stroke-width='2.4' stroke-linecap='round' stroke-linejoin='round'/><line x1='425' y1='1030.0' x2='1957' y2='1030.0' stroke='#EBEBF0' stroke-width='1.3'/><path d='M554.9,994.6 L546.4,1003.2 M546.1,996.4 L546.1,1003.5 L552.8,1003.5' fill='none' stroke='#A8A8B0' stroke-width='2.4' stroke-linecap='round' stroke-linejoin='round'/><line x1='425' y1='1092.5' x2='1957' y2='1092.5' stroke='#EBEBF0' stroke-width='1.3'/><path d='M554.9,1057.1 L546.4,1065.7 M546.1,1058.9 L546.1,1066.0 L552.8,1066.0' fill='none' stroke='#A8A8B0' stroke-width='2.4' stroke-linecap='round' stroke-linejoin='round'/><line x1='425' y1='1155.0' x2='1957' y2='1155.0' stroke='#EBEBF0' stroke-width='1.3'/><path d='M554.9,1119.6 L546.4,1128.2 M546.1,1121.4 L546.1,1128.5 L552.8,1128.5' fill='none' stroke='#A8A8B0' stroke-width='2.4' stroke-linecap='round' stroke-linejoin='round'/><line x1='425' y1='1217.5' x2='1957' y2='1217.5' stroke='#EBEBF0' stroke-width='1.3'/><path d='M554.9,1182.1 L546.4,1190.7 M546.1,1183.9 L546.1,1191.0 L552.8,1191.0' fill='none' stroke='#A8A8B0' stroke-width='2.4' stroke-linecap='round' stroke-linejoin='round'/><line x1='425' y1='1280.0' x2='1957' y2='1280.0' stroke='#EBEBF0' stroke-width='1.3'/><path d='M554.9,1244.6 L546.4,1253.2 M546.1,1246.4 L546.1,1253.5 L552.8,1253.5' fill='none' stroke='#A8A8B0' stroke-width='2.4' stroke-linecap='round' stroke-linejoin='round'/><line x1='425' y1='1342.5' x2='1957' y2='1342.5' stroke='#EBEBF0' stroke-width='1.3'/><path d='M554.9,1307.1 L546.4,1315.7 M546.1,1308.9 L546.1,1316.0 L552.8,1316.0' fill='none' stroke='#A8A8B0' stroke-width='2.4' stroke-linecap='round' stroke-linejoin='round'/></svg>
<div class='abs' style='left:460.6px;top:858.1px;width:57.4px;height:32.9px;border-radius:17px;background:#D4F5DF;border:1.3px solid #BDEBCB'></div>
<div class='t' style='left:490.8px;transform:translateX(-50%);top:867.2px;font-size:17px;color:#3A7558;font-weight:400;font-family:"Liberation Sans",sans-serif;-webkit-text-stroke:0.2px #3A7558;letter-spacing:1px;'>200</div>
<div class='t' style='left:580.0px;top:865.5px;font-size:19.3px;color:#83838A;font-weight:400;font-family:"Liberation Sans",sans-serif;letter-spacing:-0.2px;'>GET</div>
<div class='t' style='left:696.3px;top:860.9px;font-size:24px;color:#85858D;font-weight:400;font-family:"Liberation Sans",sans-serif;letter-spacing:0.08px;'>secret-api.evervault.com<span style='color:#4A4A55'>/teams/42424242424/relays</span></div>
<div class='t' style='right:557.6px;top:864.0px;font-size:20.8px;color:#505058;font-weight:400;font-family:"Liberation Sans",sans-serif;letter-spacing:0.45px;'>13:46:24</div>
<div class='t' style='right:462.3px;top:863.8px;font-size:20.8px;color:#85858D;font-weight:400;font-family:"Liberation Sans",sans-serif;letter-spacing:0.25px;'>171 ms</div>
<div class='abs' style='left:460.6px;top:920.6px;width:57.4px;height:32.9px;border-radius:17px;background:#D4F5DF;border:1.3px solid #BDEBCB'></div>
<div class='t' style='left:490.8px;transform:translateX(-50%);top:929.7px;font-size:17px;color:#3A7558;font-weight:400;font-family:"Liberation Sans",sans-serif;-webkit-text-stroke:0.2px #3A7558;letter-spacing:1px;'>200</div>
<div class='t' style='left:580.0px;top:928.0px;font-size:19.3px;color:#83838A;font-weight:400;font-family:"Liberation Sans",sans-serif;letter-spacing:-0.2px;'>GET</div>
<div class='t' style='left:696.3px;top:923.4px;font-size:24px;color:#85858D;font-weight:400;font-family:"Liberation Sans",sans-serif;letter-spacing:0.08px;'>secret-api.evervault.com<span style='color:#4A4A55'>/teams/42424242424/cages</span></div>
<div class='t' style='right:557.6px;top:926.5px;font-size:20.8px;color:#505058;font-weight:400;font-family:"Liberation Sans",sans-serif;letter-spacing:0.45px;'>13:46:24</div>
<div class='t' style='right:462.3px;top:926.3px;font-size:20.8px;color:#85858D;font-weight:400;font-family:"Liberation Sans",sans-serif;letter-spacing:0.25px;'>39 ms</div>
<div class='abs' style='left:460.6px;top:983.1px;width:57.4px;height:32.9px;border-radius:17px;background:#D4F5DF;border:1.3px solid #BDEBCB'></div>
<div class='t' style='left:490.8px;transform:translateX(-50%);top:992.2px;font-size:17px;color:#3A7558;font-weight:400;font-family:"Liberation Sans",sans-serif;-webkit-text-stroke:0.2px #3A7558;letter-spacing:1px;'>201</div>
<div class='t' style='left:580.0px;top:990.5px;font-size:19.3px;color:#83838A;font-weight:400;font-family:"Liberation Sans",sans-serif;letter-spacing:-0.2px;'>GET</div>
<div class='t' style='left:696.3px;top:985.9px;font-size:24px;color:#85858D;font-weight:400;font-family:"Liberation Sans",sans-serif;letter-spacing:0.08px;'>secret-api.evervault.com<span style='color:#4A4A55'>/teams/42424242424/permissions</span></div>
<div class='t' style='right:557.6px;top:989.0px;font-size:20.8px;color:#505058;font-weight:400;font-family:"Liberation Sans",sans-serif;letter-spacing:0.45px;'>13:46:24</div>
<div class='t' style='right:462.3px;top:988.8px;font-size:20.8px;color:#85858D;font-weight:400;font-family:"Liberation Sans",sans-serif;letter-spacing:0.25px;'>357 ms</div>
<div class='abs' style='left:460.6px;top:1045.6px;width:57.4px;height:32.9px;border-radius:17px;background:#D4F5DF;border:1.3px solid #BDEBCB'></div>
<div class='t' style='left:490.8px;transform:translateX(-50%);top:1054.7px;font-size:17px;color:#3A7558;font-weight:400;font-family:"Liberation Sans",sans-serif;-webkit-text-stroke:0.2px #3A7558;letter-spacing:1px;'>204</div>
<div class='t' style='left:580.0px;top:1053.0px;font-size:19.3px;color:#83838A;font-weight:400;font-family:"Liberation Sans",sans-serif;letter-spacing:0.45px;'>OPTIONS</div>
<div class='t' style='left:696.3px;top:1048.4px;font-size:24px;color:#85858D;font-weight:400;font-family:"Liberation Sans",sans-serif;letter-spacing:0.08px;'>secret-api.evervault.com<span style='color:#4A4A55'>/teams/42424242424/cages</span></div>
<div class='t' style='right:557.6px;top:1051.5px;font-size:20.8px;color:#505058;font-weight:400;font-family:"Liberation Sans",sans-serif;letter-spacing:0.45px;'>13:46:24</div>
<div class='t' style='right:462.3px;top:1051.3px;font-size:20.8px;color:#85858D;font-weight:400;font-family:"Liberation Sans",sans-serif;letter-spacing:0.25px;'>288 ms</div>
<div class='abs' style='left:460.6px;top:1108.1px;width:57.4px;height:32.9px;border-radius:17px;background:#D4F5DF;border:1.3px solid #BDEBCB'></div>
<div class='t' style='left:490.8px;transform:translateX(-50%);top:1117.2px;font-size:17px;color:#3A7558;font-weight:400;font-family:"Liberation Sans",sans-serif;-webkit-text-stroke:0.2px #3A7558;letter-spacing:1px;'>204</div>
<div class='t' style='left:580.0px;top:1115.5px;font-size:19.3px;color:#83838A;font-weight:400;font-family:"Liberation Sans",sans-serif;letter-spacing:0.45px;'>OPTIONS</div>
<div class='t' style='left:696.3px;top:1110.9px;font-size:24px;color:#85858D;font-weight:400;font-family:"Liberation Sans",sans-serif;letter-spacing:0.08px;'>secret-api.evervault.com<span style='color:#4A4A55'>/teams/42424242424/relays</span></div>
<div class='t' style='right:557.6px;top:1114.0px;font-size:20.8px;color:#505058;font-weight:400;font-family:"Liberation Sans",sans-serif;letter-spacing:0.45px;'>13:46:24</div>
<div class='t' style='right:462.3px;top:1113.8px;font-size:20.8px;color:#85858D;font-weight:400;font-family:"Liberation Sans",sans-serif;letter-spacing:0.25px;'>284 ms</div>
<div class='abs' style='left:460.6px;top:1170.6px;width:57.4px;height:32.9px;border-radius:17px;background:#D4F5DF;border:1.3px solid #BDEBCB'></div>
<div class='t' style='left:490.8px;transform:translateX(-50%);top:1179.7px;font-size:17px;color:#3A7558;font-weight:400;font-family:"Liberation Sans",sans-serif;-webkit-text-stroke:0.2px #3A7558;letter-spacing:1px;'>204</div>
<div class='t' style='left:580.0px;top:1178.0px;font-size:19.3px;color:#83838A;font-weight:400;font-family:"Liberation Sans",sans-serif;letter-spacing:0.45px;'>OPTIONS</div>
<div class='t' style='left:696.3px;top:1173.4px;font-size:24px;color:#85858D;font-weight:400;font-family:"Liberation Sans",sans-serif;letter-spacing:0.08px;'>secret-api.evervault.com<span style='color:#4A4A55'>/teams/42424242424/permissions</span></div>
<div class='t' style='right:557.6px;top:1176.5px;font-size:20.8px;color:#505058;font-weight:400;font-family:"Liberation Sans",sans-serif;letter-spacing:0.45px;'>13:46:24</div>
<div class='t' style='right:462.3px;top:1176.3px;font-size:20.8px;color:#85858D;font-weight:400;font-family:"Liberation Sans",sans-serif;letter-spacing:0.25px;'>279 ms</div>
<div class='abs' style='left:460.6px;top:1233.1px;width:57.4px;height:32.9px;border-radius:17px;background:#D4F5DF;border:1.3px solid #BDEBCB'></div>
<div class='t' style='left:490.8px;transform:translateX(-50%);top:1242.2px;font-size:17px;color:#3A7558;font-weight:400;font-family:"Liberation Sans",sans-serif;-webkit-text-stroke:0.2px #3A7558;letter-spacing:1px;'>200</div>
<div class='t' style='left:580.0px;top:1240.5px;font-size:19.3px;color:#83838A;font-weight:400;font-family:"Liberation Sans",sans-serif;letter-spacing:-0.2px;'>GET</div>
<div class='t' style='left:696.3px;top:1235.9px;font-size:24px;color:#85858D;font-weight:400;font-family:"Liberation Sans",sans-serif;letter-spacing:0.08px;'>secret-api.evervault.com<span style='color:#4A4A55'>/teams/42424242424</span></div>
<div class='t' style='right:557.6px;top:1239.0px;font-size:20.8px;color:#505058;font-weight:400;font-family:"Liberation Sans",sans-serif;letter-spacing:0.45px;'>13:46:23</div>
<div class='t' style='right:462.3px;top:1238.8px;font-size:20.8px;color:#85858D;font-weight:400;font-family:"Liberation Sans",sans-serif;letter-spacing:0.25px;'>130 ms</div>
<div class='abs' style='left:460.6px;top:1295.6px;width:57.4px;height:32.9px;border-radius:17px;background:#D4F5DF;border:1.3px solid #BDEBCB'></div>
<div class='t' style='left:490.8px;transform:translateX(-50%);top:1304.7px;font-size:17px;color:#3A7558;font-weight:400;font-family:"Liberation Sans",sans-serif;-webkit-text-stroke:0.2px #3A7558;letter-spacing:1px;'>204</div>
<div class='t' style='left:580.0px;top:1303.0px;font-size:19.3px;color:#83838A;font-weight:400;font-family:"Liberation Sans",sans-serif;letter-spacing:0.45px;'>OPTIONS</div>
<div class='t' style='left:696.3px;top:1298.4px;font-size:24px;color:#85858D;font-weight:400;font-family:"Liberation Sans",sans-serif;letter-spacing:0.08px;'>secret-api.evervault.com<span style='color:#4A4A55'>/teams/42424242424</span></div>
<div class='t' style='right:557.6px;top:1301.5px;font-size:20.8px;color:#505058;font-weight:400;font-family:"Liberation Sans",sans-serif;letter-spacing:0.45px;'>13:46:22</div>
<div class='t' style='right:462.3px;top:1301.3px;font-size:20.8px;color:#85858D;font-weight:400;font-family:"Liberation Sans",sans-serif;letter-spacing:0.25px;'>284 ms</div>

</body></html>
